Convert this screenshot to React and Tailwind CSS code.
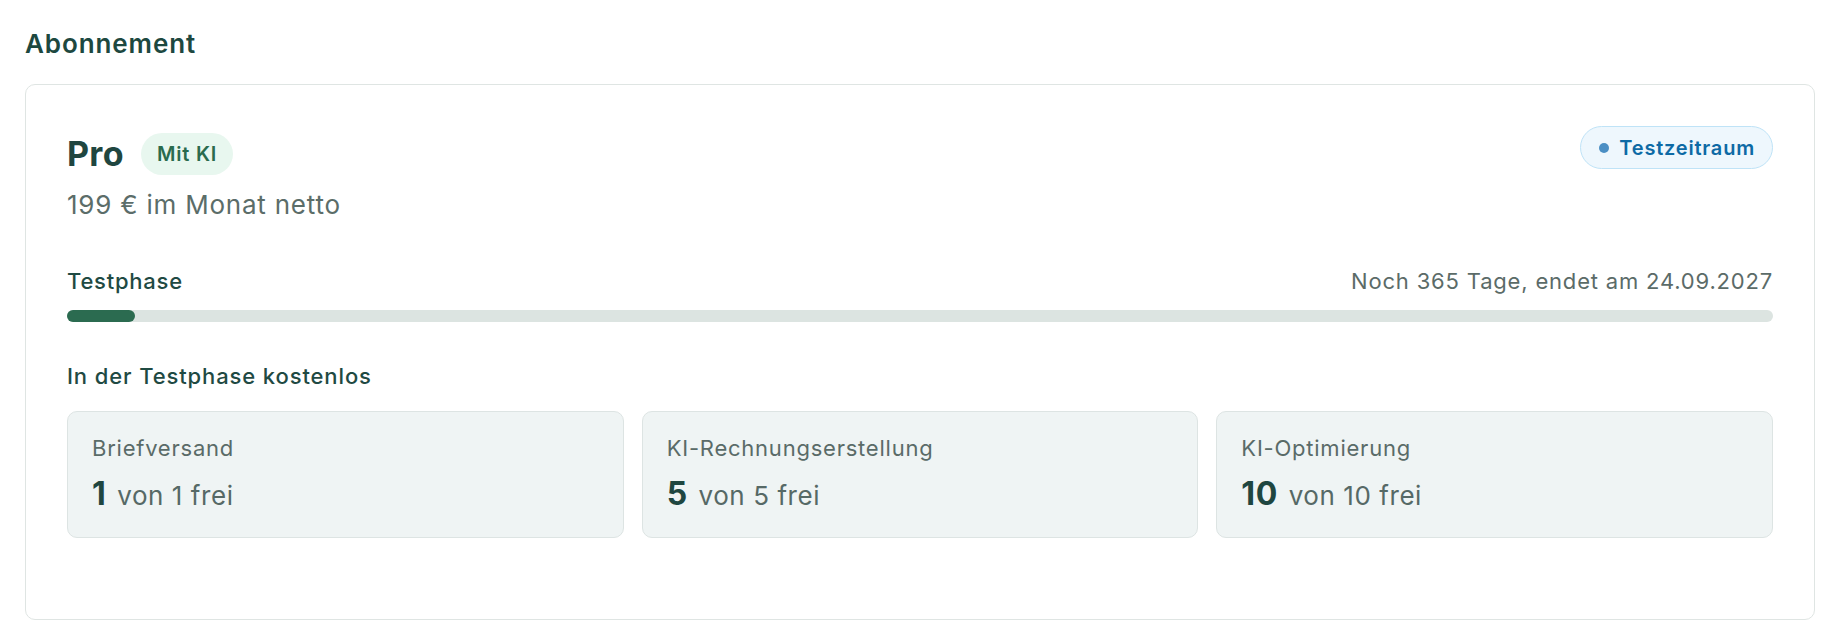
import React from 'react';

const freebies = [
  { label: 'Briefversand', used: 1, total: 1 },
  { label: 'KI-Rechnungserstellung', used: 5, total: 5 },
  { label: 'KI-Optimierung', used: 10, total: 10 },
];

const UsageCard = ({ label, used, total }) => (
  <div className="rounded-[10px] border border-[#dde4e3] bg-[#eff4f4] px-6 pt-[21px] pb-[19px]">
    <p className="text-[22px] leading-[30px] tracking-[0.035em] text-[#5a6b68]">{label}</p>
    <p className="mt-3 leading-[38px] tracking-[0.035em] text-[#566966]">
      <span className="text-[32px] font-bold text-[#1f4640]">{used}</span>
      <span className="ml-[3px] text-[26px]"> von {total} frei</span>
    </p>
  </div>
);

const App = () => {
  const progress = 4;

  return (
    <div className="min-h-screen bg-white px-[25px] pt-[27px] font-['Inter','Noto_Sans',sans-serif]">
      <h2 className="text-[26px] font-semibold leading-[34px] tracking-[0.035em] text-[#1d4840]">Abonnement</h2>

      <section className="mt-[23px] rounded-[10px] border border-[#dfe5e3] px-[41px] pt-[41px] pb-[81px]">
        {/* Plan header */}
        <div className="flex items-start justify-between">
          <div>
            <div className="flex items-center gap-[17px]">
              <span className="text-[34px] font-bold leading-[56px] tracking-[0.01em] text-[#1f4640]">Pro</span>
              <span className="flex h-[42px] items-center rounded-full bg-[#e8f7ef] px-[16px] text-[20px] font-semibold tracking-[0.04em] text-[#2a6b4e]">
                Mit KI
              </span>
            </div>
            <p className="mt-[6px] text-[26px] leading-[34px] tracking-[0.03em] text-[#5b6d69]">199 € im Monat netto</p>
          </div>

          <span className="flex h-[43px] items-center gap-[10px] rounded-full border border-[#bfe3f7] bg-[#eef7fd] pl-[18px] pr-[17px] text-[20px] font-semibold tracking-[0.04em] text-[#0d6aa5]">
            <span className="h-[10px] w-[10px] rounded-full bg-[#4b8fc4]"></span>
            Testzeitraum
          </span>
        </div>

        {/* Trial progress */}
        <div className="mt-[44px] flex items-center justify-between">
          <span className="text-[22px] font-medium leading-[30px] tracking-[0.035em] text-[#1f4a43]">Testphase</span>
          <span className="text-[22px] leading-[30px] tracking-[0.037em] text-[#5b6b68]">
            Noch 365 Tage, endet am 24.09.2027
          </span>
        </div>
        <div className="mt-[14px] h-3 w-full rounded-full bg-[#dce4e1]">
          <div className="h-3 rounded-full bg-[#2b6b50]" style={{ width: `${progress}%` }}></div>
        </div>

        {/* Free during trial */}
        <p className="mt-[39px] text-[22px] font-medium leading-[30px] tracking-[0.04em] text-[#1f4a43]">
          In der Testphase kostenlos
        </p>
        <div className="mt-5 grid grid-cols-3 gap-[18px]">
          {freebies.map((item) => (
            <UsageCard key={item.label} {...item} />
          ))}
        </div>
      </section>
    </div>
  );
};

export default App;
